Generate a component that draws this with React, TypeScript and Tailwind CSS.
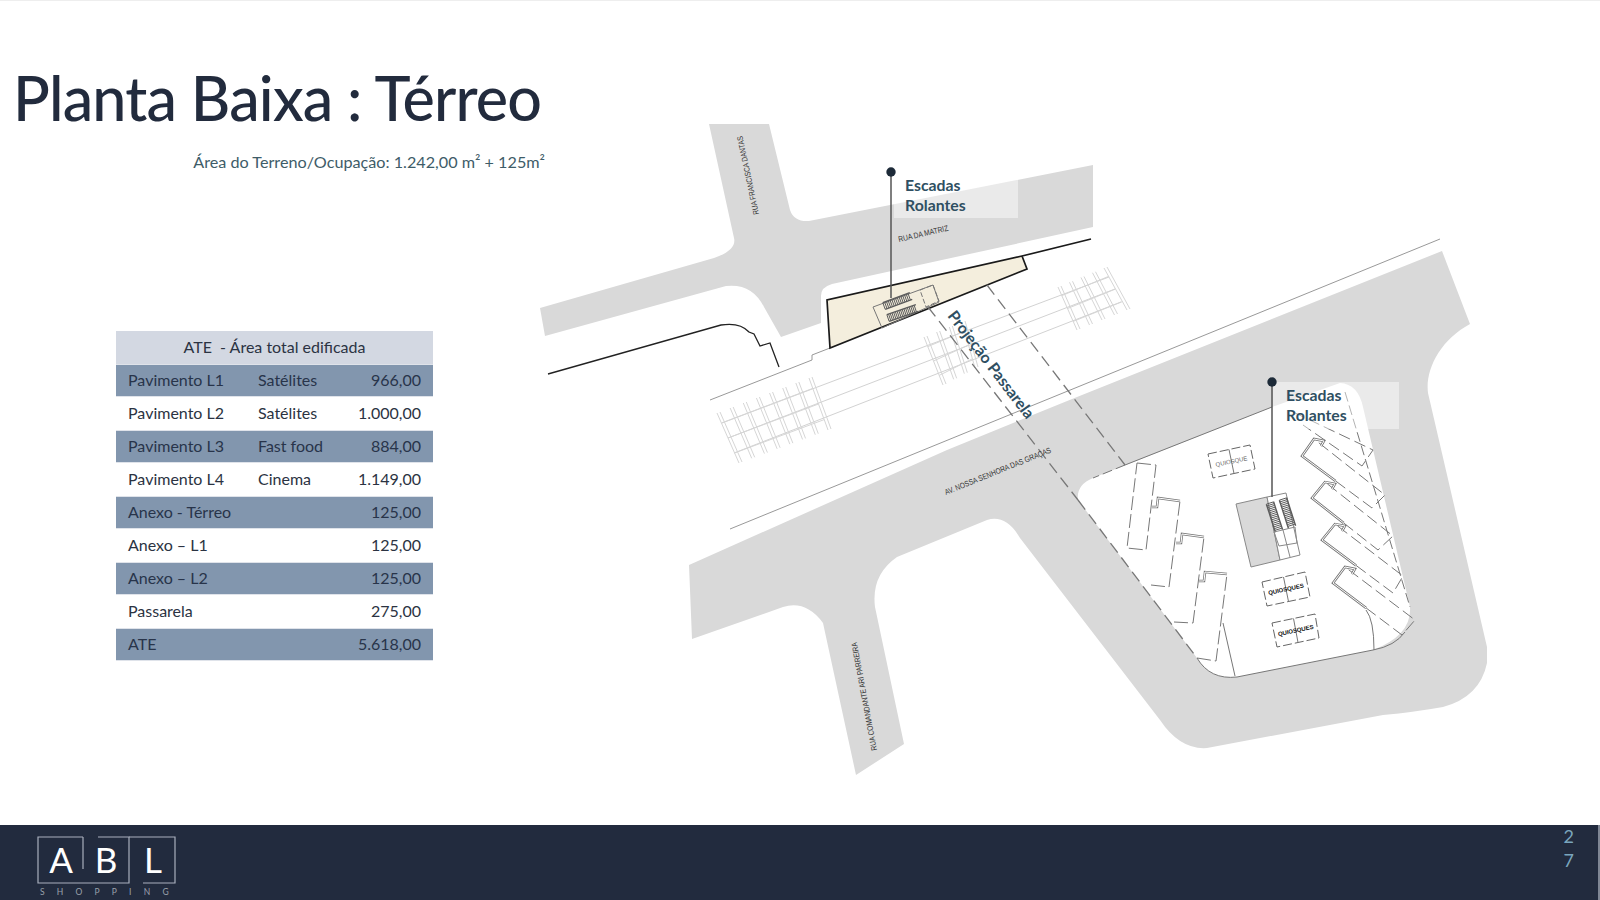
type P = [number, number];

const rows = [
  { name: 'Pavimento L1', use: 'Satélites', area: '966,00' },
  { name: 'Pavimento L2', use: 'Satélites', area: '1.000,00' },
  { name: 'Pavimento L3', use: 'Fast food', area: '884,00' },
  { name: 'Pavimento L4', use: 'Cinema', area: '1.149,00' },
  { name: 'Anexo - Térreo', use: '', area: '125,00' },
  { name: 'Anexo – L1', use: '', area: '125,00' },
  { name: 'Anexo – L2', use: '', area: '125,00' },
  { name: 'Passarela', use: '', area: '275,00' },
  { name: 'ATE', use: '', area: '5.618,00' },
];

const lerp = (a: P, b: P, t: number): P => [a[0] + (b[0] - a[0]) * t, a[1] + (b[1] - a[1]) * t];
const pts = (list: P[]) => list.map((p) => p.join(',')).join(' ');

// rail cluster: a-b is the top edge, d-c the bottom edge
function Cluster({ a, b, c, d, n }: { a: P; b: P; c: P; d: P; n: number }) {
  const ties = Array.from({ length: n }, (_, i) => i / (n - 1));
  return (
    <g stroke="#d6d6d6" strokeWidth="1" fill="none">
      {ties.map((t) => {
        const p = lerp(a, b, t);
        const q = lerp(d, c, t);
        return (
          <g key={t}>
            <line x1={p[0]} y1={p[1]} x2={q[0]} y2={q[1]} />
            <line x1={p[0] + 3} y1={p[1] - 1} x2={q[0] + 3} y2={q[1] - 1} />
          </g>
        );
      })}
      {[0.2, 0.5, 0.8].map((t) => {
        const p = lerp(a, d, t);
        const q = lerp(b, c, t);
        return <line key={t} x1={p[0]} y1={p[1]} x2={q[0]} y2={q[1]} />;
      })}
    </g>
  );
}

function Kiosk({ c, label, dark }: { c: P[]; label: string; dark?: boolean }) {
  const mid1 = lerp(c[0], c[1], 0.5);
  const mid2 = lerp(c[3], c[2], 0.5);
  const cx = (mid1[0] + mid2[0]) / 2;
  const cy = (mid1[1] + mid2[1]) / 2;
  return (
    <g>
      <polygon points={pts(c)} fill="none" stroke="#666" strokeWidth="1" strokeDasharray="9 3" />
      <line x1={mid1[0]} y1={mid1[1]} x2={mid2[0]} y2={mid2[1]} stroke="#777" strokeWidth="1" />
      <text
        x={cx}
        y={cy + 2}
        textAnchor="middle"
        transform={`rotate(-12 ${cx} ${cy})`}
        className={`font-['Liberation_Sans',sans-serif] text-[6px] ${dark ? 'font-bold' : ''}`}
        fill={dark ? '#111' : '#666'}
      >
        {label}
      </text>
    </g>
  );
}

// shop on the left side of the block
function ShopLeft({ c }: { c: P[] }) {
  const notch: P = [c[0][0] - 6, c[0][1] + 9];
  return (
    <g fill="none">
      <polyline points={pts([c[3], c[2], c[1]])} stroke="#777" strokeWidth="1" strokeDasharray="14 4" />
      <polyline points={pts([notch, [c[0][0] - 1, c[0][1] + 9], c[0], c[1]])} stroke="#777" strokeWidth="2.5" />
      <polyline points={pts([notch, [c[0][0] - 1, c[0][1] + 9], c[0], c[1]])} stroke="#fff" strokeWidth="1" />
    </g>
  );
}

// shop on the right side of the block
function ShopRight({ c }: { c: P[] }) {
  const half = lerp(c[1], c[2], 0.48);
  const notch: P = [c[0][0] + 10, c[0][1] + 2];
  return (
    <g fill="none">
      <polyline points={pts([half, c[2], c[3], c[0]])} stroke="#777" strokeWidth="1" strokeDasharray="12 5" />
      <polyline points={pts([[notch[0] - 3, notch[1] + 5], notch, c[0], c[1], half])} stroke="#777" strokeWidth="2.5" />
      <polyline points={pts([[notch[0] - 3, notch[1] + 5], notch, c[0], c[1], half])} stroke="#fff" strokeWidth="1" />
    </g>
  );
}

function Stairs({ from, to, w }: { from: P; to: P; w: number }) {
  const dx = to[0] - from[0];
  const dy = to[1] - from[1];
  const len = Math.hypot(dx, dy);
  const nx = (-dy / len) * w;
  const ny = (dx / len) * w;
  const steps = Math.floor(len / 1.8);
  return (
    <g stroke="#5c5c5c" fill="none">
      <line x1={from[0] - nx} y1={from[1] - ny} x2={to[0] - nx} y2={to[1] - ny} strokeWidth="1.4" />
      <line x1={from[0] + nx} y1={from[1] + ny} x2={to[0] + nx} y2={to[1] + ny} strokeWidth="1.4" />
      {Array.from({ length: steps }, (_, i) => {
        const p = lerp(from, to, i / steps);
        return <line key={i} x1={p[0] - nx} y1={p[1] - ny} x2={p[0] + nx} y2={p[1] + ny} strokeWidth="1" />;
      })}
    </g>
  );
}

function SitePlan() {
  const labelFont = "font-['Liberation_Sans',sans-serif]";
  const noteFont = "font-['Lato',sans-serif] font-bold";
  return (
    <svg viewBox="545 1 1055 824" className="w-[1055px] h-[824px] overflow-visible shrink-0">
      {/* roads */}
      <path
        fill="#d9d9d9"
        d="M709,124 L769,124 L790,210 Q794,222 809,221 L1093,165 L1093,227 L832,284 Q821,287 821,296 L821,323 L781,337 L764,307 Q752,283 726,286 L545,336 L540,308 L714,258 Q737,250 734,238 Z"
      />
      <path
        fill="#d9d9d9"
        d="M689,565 L692,639 L783,607 Q806,600 823,623 L856,775 L904,744 L875,607 Q871,575 897,557 L987,520 Q1006,514 1020,538 L1160,720 Q1180,750 1207,748 L1383,715 Q1415,712 1443,707 Q1480,697 1487,663 L1487,647 L1428,393 C1425,370 1440,340 1470,324 L1442,251 L1077,397 L947,450 Z"
      />
      {/* block */}
      <path
        fill="#fff"
        d="M1078,500 Q1076,485 1093,478 L1272,407 L1340,383 Q1358,384 1363,407 L1410,607 Q1412,635 1373,650 L1237,677 Q1210,680 1197,658 Z"
      />
      <polyline points="1272,407 1125,465" fill="none" stroke="#777" strokeWidth="1" />
      <polyline points="1125,465 1093,478" fill="none" stroke="#777" strokeWidth="1" strokeDasharray="10 4" />
      <path d="M1237,677 L1373,650 Q1395,646 1405,632" fill="none" stroke="#777" strokeWidth="1" />
      <path d="M1223,623 L1235,676" fill="none" stroke="#777" strokeWidth="1" />
      <path d="M1366,610 Q1374,620 1374,650" fill="none" stroke="#777" strokeWidth="1" />
      <path d="M1197,658 Q1210,680 1237,677" fill="none" stroke="#777" strokeWidth="1" />
      <line x1="1345" y1="392" x2="1410" y2="607" stroke="#777" strokeWidth="1" strokeDasharray="10 4" />

      {/* thin street lines */}
      <line x1="730" y1="529" x2="1440" y2="239" stroke="#999" strokeWidth="1" />
      <polyline points="830,348 812,355 812,360 710,400" fill="none" stroke="#999" strokeWidth="1" />

      {/* rails */}
      <g stroke="#d2d2d2" strokeWidth="1">
        <line x1="722" y1="423" x2="1109" y2="277" />
        <line x1="728" y1="438" x2="1115" y2="289" />
        <line x1="734" y1="453" x2="1121" y2="302" />
      </g>
      <Cluster a={[717, 413]} b={[809, 378]} c={[828, 430]} d={[739, 463]} n={8} />
      <Cluster a={[924, 337]} b={[962, 322]} c={[975, 368]} d={[943, 385]} n={4} />
      <Cluster a={[1058, 287]} b={[1104, 268]} c={[1127, 310]} d={[1077, 330]} n={5} />

      {/* building */}
      <polygon points="827,300 1022,256 1027,269 830,348" fill="#f4eedd" />
      <polyline points="1091,239 1022,256 827,300 830,348 1027,269 1022,256" fill="none" stroke="#1a1a1a" strokeWidth="1.7" />
      <path
        d="M548,374 L721,325 Q740,322 749,332 L754,334 L760,346 L770,343 L779,367"
        fill="none"
        stroke="#222"
        strokeWidth="1.3"
      />

      {/* upper stairs */}
      <polygon points="873,307 933,285 939,302 882,328" fill="none" stroke="#777" strokeWidth="1" />
      <polygon points="920,290 933,285 939,301 926,307" fill="none" stroke="#777" strokeWidth="1" strokeDasharray="5 2" />
      <Stairs from={[884, 306]} to={[911, 296]} w={3.5} />
      <Stairs from={[888, 318]} to={[917, 308]} w={3.5} />

      {/* projection lines */}
      <g fill="none" stroke="#777" strokeWidth="1.3" strokeDasharray="12 6">
        <line x1="928" y1="307" x2="1078" y2="500" />
        <line x1="1078" y1="500" x2="1197" y2="658" />
        <line x1="987" y1="285" x2="1125" y2="465" />
      </g>

      {/* shops */}
      <polygon
        points="1137,463 1156,465 1146,550 1127,548"
        fill="none"
        stroke="#777"
        strokeWidth="1"
        strokeDasharray="14 4"
      />
      <ShopLeft c={[[1158, 498], [1180, 501], [1169, 587], [1151, 585]]} />
      <ShopLeft c={[[1182, 534], [1204, 537], [1193, 623], [1174, 622]]} />
      <ShopLeft c={[[1205, 572], [1227, 574], [1216, 661], [1197, 658]]} />

      <polyline points="1293,412 1373,450 1362,466 1303,425" fill="none" stroke="#777" strokeWidth="1" strokeDasharray="12 5" />
      <ShopRight c={[[1314, 439], [1302, 456], [1372, 508], [1385, 495]]} />
      <ShopRight c={[[1325, 482], [1312, 498], [1378, 550], [1393, 536]]} />
      <ShopRight c={[[1335, 524], [1322, 540], [1393, 593], [1403, 576]]} />
      <ShopRight c={[[1345, 567], [1333, 583], [1402, 635], [1415, 620]]} />

      {/* kiosks */}
      <Kiosk c={[[1208, 454], [1250, 445], [1255, 469], [1213, 478]]} label="QUIOSQUE" />
      <Kiosk c={[[1262, 582], [1305, 572], [1310, 597], [1267, 606]]} label="QUIOSQUES" dark />
      <Kiosk c={[[1272, 623], [1315, 614], [1319, 638], [1277, 647]]} label="QUIOSQUES" dark />

      {/* core */}
      <polygon points="1236,504 1267,497 1280,560 1251,567" fill="#d9d9d9" stroke="#888" strokeWidth="1" />
      <polygon points="1267,497 1286,493 1300,555 1280,560" fill="#fff" stroke="#888" strokeWidth="1" />
      <Stairs from={[1270, 503]} to={[1279, 531]} w={3.8} />
      <Stairs from={[1283, 499]} to={[1292, 527]} w={3.8} />
      <polygon points="1274,532 1295,527 1297,543 1279,546" fill="none" stroke="#888" strokeWidth="1" />
      <line x1="1283" y1="530" x2="1290" y2="557" stroke="#888" strokeWidth="1" />

      {/* street names */}
      <g fill="#333" className={`${labelFont} text-[8px]`}>
        <text x="759" y="214" textLength="80" lengthAdjust="spacingAndGlyphs" transform="rotate(-102 759 214)">
          RUA FRANCISCA DANTAS
        </text>
        <text x="899" y="242" textLength="51" lengthAdjust="spacingAndGlyphs" transform="rotate(-13 899 242)">
          RUA DA MATRIZ
        </text>
        <text x="946" y="495" textLength="114" lengthAdjust="spacingAndGlyphs" transform="rotate(-22 946 495)">
          AV. NOSSA SENHORA DAS GRAÇAS
        </text>
        <text x="877" y="750" textLength="110" lengthAdjust="spacingAndGlyphs" transform="rotate(-100.6 877 750)">
          RUA COMANDANTE ARI PARREIRA
        </text>
      </g>

      {/* notes */}
      <rect x="894" y="173" width="124" height="45" fill="#fff" fillOpacity="0.45" />
      <rect x="1273" y="382" width="126" height="47" fill="#fff" fillOpacity="0.45" />
      <g fill="#2f4f62" className={`${noteFont} text-[15.8px]`}>
        <text x="905" y="191">Escadas</text>
        <text x="905" y="211">Rolantes</text>
        <text x="1286" y="401">Escadas</text>
        <text x="1286" y="421">Rolantes</text>
        <text x="947" y="316" transform="rotate(52.6 947 316)">Projeção Passarela</text>
      </g>

      {/* pins */}
      <line x1="891" y1="172" x2="891" y2="298" stroke="#555" strokeWidth="1.5" />
      <circle cx="891" cy="172" r="4.7" fill="#1d2a38" />
      <line x1="1272" y1="382" x2="1272" y2="497" stroke="#555" strokeWidth="1.5" />
      <circle cx="1272" cy="382" r="4.7" fill="#1d2a38" />
    </svg>
  );
}

function Logo() {
  return (
    <svg viewBox="0 0 156 64" className="w-[156px] h-[64px]">
      <g fill="none" stroke="#a9afbd" strokeWidth="1.2">
        <polyline points="46,1 1,1 1,47 92,47 92,1 61,1" />
        <line x1="46" y1="1" x2="46" y2="33" />
        <polyline points="92,1 138,1 138,47 106,47" />
      </g>
      <g fill="#fff" className="font-['Lato',sans-serif] text-[35px]" textAnchor="middle">
        <text x="24" y="37">A</text>
        <text x="69" y="37">B</text>
        <text x="116" y="37">L</text>
      </g>
      <text x="3" y="59" fill="#9aa0ac" className="font-['Lato',sans-serif] text-[8.5px] tracking-[12.2px]">
        SHOPPING
      </text>
    </svg>
  );
}

export default function App() {
  return (
    <div className="w-[1600px] h-[900px] flex flex-col bg-white overflow-hidden border-t border-[#eeeeee] font-['Lato',sans-serif]">
      <div className="flex-1 flex min-h-0">
        <div className="w-[545px] shrink-0 flex flex-col">
          <h1 className="pl-[13px] pt-[60px] text-[61px] tracking-[-0.8px] font-medium leading-[74px] text-[#222b3d] whitespace-nowrap">
            Planta Baixa : Térreo
          </h1>
          <p className="mt-[16px] text-right text-[16.2px] leading-[22px] text-[#3e5c68] whitespace-nowrap">
            Área do Terreno/Ocupação: 1.242,00 m² + 125m²
          </p>
          <div className="mt-[158px] ml-[116px] w-[317px] text-[16px] text-[#2b3342]">
            <div className="h-[33px] pb-[2px] flex items-center justify-center bg-[#d3d8e2]">ATE&nbsp; - Área total edificada</div>
            {rows.map((row, i) => (
              <div
                key={row.name + i}
                className={`h-[33px] pb-[2px] grid grid-cols-[130px_1fr_auto] items-center px-3 ${
                  i % 2 === 0 ? 'bg-[#8296ae] text-[#28344a] border-y border-[#dfe3ea]' : ''
                }`}
              >
                <span className="whitespace-nowrap">{row.name}</span>
                <span className="whitespace-nowrap">{row.use}</span>
                <span className="text-right">{row.area}</span>
              </div>
            ))}
          </div>
        </div>
        <SitePlan />
      </div>
      <footer className="h-[75px] shrink-0 bg-[#222b3e] border-r-2 border-[#7f8694] flex justify-between pl-[37px] pr-[24px] pt-[11px]">
        <Logo />
        <div className="text-[18px] leading-[24px] text-[#7aa5bd] text-center -mt-[12px]">
          <div>2</div>
          <div>7</div>
        </div>
      </footer>
    </div>
  );
}
